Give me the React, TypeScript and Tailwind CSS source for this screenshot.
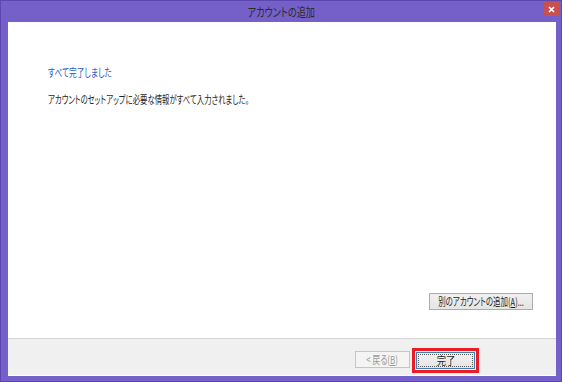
import React from 'react';

const jp = "font-['Meiryo_UI','Noto_Sans_CJK_JP',sans-serif] [font-feature-settings:'palt']";

// Meiryo UI の仮名は狭いので、横方向に詰めて近づける
function Narrow({ children, className = '' }: { children: React.ReactNode; className?: string }) {
  return <span className={`inline-block whitespace-nowrap ${className}`}>{children}</span>;
}

function CloseButton() {
  return (
    <div className="absolute right-[2px] top-[1px] w-[15px] h-[14px] bg-[#c75050] flex items-center justify-center">
      <svg width="7" height="7" viewBox="0 0 7 7">
        <path d="M1 1 L6 6 M6 1 L1 6" stroke="#ffffff" strokeWidth="1.6" />
      </svg>
    </div>
  );
}

export default function App() {
  return (
    <div className={`w-[562px] h-[382px] bg-[#7460c8] border border-[#5b47ae] flex flex-col ${jp}`}>
      <div className="relative h-[21px] flex items-center justify-center">
        <Narrow className="scale-x-[0.76] text-[12px] text-[#2b2b2b] leading-none">アカウントの追加</Narrow>
        <CloseButton />
      </div>

      <div className="flex-1 ml-[7px] mr-[5px] mb-[5px] flex flex-col bg-white">
        <div className="flex-1 flex flex-col items-start px-[40px] pt-[44px] pb-[28px]">
          <Narrow className="origin-left scale-x-[0.7] text-[11px] leading-[12px] text-[#1e5bc6]">すべて完了しました</Narrow>
          <Narrow className="origin-left scale-x-[0.67] mt-[15px] text-[11px] leading-[12px] text-[#1f1f1f]">
            アカウントのセットアップに必要な情報がすべて入力されました。
          </Narrow>
          <div className="mt-auto self-stretch flex justify-end -mr-[17px]">
            <button className="w-[104px] h-[17px] border border-[#acacac] bg-gradient-to-b from-[#f0f0f0] to-[#e5e5e5] flex items-center justify-center overflow-visible">
              <Narrow className="scale-x-[0.68] text-[11px] leading-none text-[#1f1f1f]">
                別のアカウントの追加(<span className="underline">A</span>)...
              </Narrow>
            </button>
          </div>
        </div>

        <div className="h-[38px] bg-[#f0f0f0] border-t border-[#d5d5d5] border-b border-b-white flex items-start pt-[9px] pl-[347px]">
          <button className="mt-[3px] w-[55px] h-[17px] border border-[#c5c5c5] bg-[#f4f4f4] flex items-center justify-center">
            <Narrow className="scale-x-[0.72] text-[11px] leading-none text-[#9a9a9a]">
              &lt; 戻る(<span className="underline">B</span>)
            </Narrow>
          </button>
          <div className="ml-[2px] border-[3px] border-[#ec1c24] p-[1px]">
            <div className="w-[59px] h-[17px] border border-[#3c7fb1] bg-gradient-to-b from-[#f2f2f2] to-[#e4e4e4] p-[1px]">
              <div className="w-full h-full border border-dotted border-[#5a5a5a] flex items-center justify-center">
                <Narrow className="scale-x-[0.85] text-[11px] leading-none text-[#1f1f1f]">完了</Narrow>
              </div>
            </div>
          </div>
        </div>
      </div>
    </div>
  );
}
